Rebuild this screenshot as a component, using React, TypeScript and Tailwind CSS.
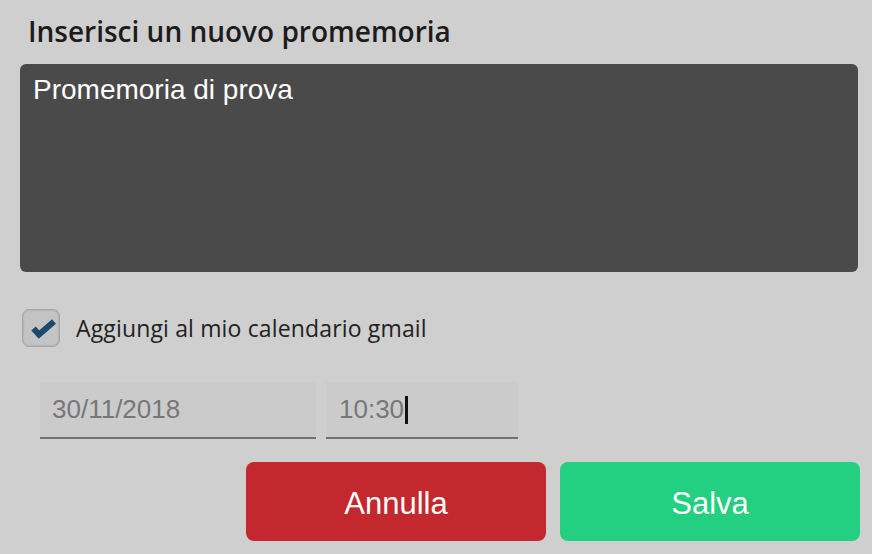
export default function App() {
  return (
    <div className="w-[872px] h-[554px] bg-[#cfcfcf] relative overflow-hidden">
      <div className="pl-[28px] pt-[16px] h-[64px] text-[28px] font-semibold text-[#1c1c1c] leading-[30px]" style={{ fontFamily: '"Open Sans", sans-serif' }}>
        Inserisci un nuovo promemoria
      </div>
      <div className="ml-[20px] w-[838px] h-[208px] bg-[#4a4a4a] rounded-[6px] px-[13px] pt-[10px] text-white text-[28px] leading-[32px]" style={{ fontFamily: '"Liberation Sans", Arial, sans-serif' }}>
        Promemoria di prova
      </div>
      <div className="flex items-center mt-[37px] ml-[22px] h-[38px]">
        <div className="w-[38px] h-[38px] rounded-[7px] bg-[#c4c4c4] border border-[#a6a6a6] shadow-[inset_0_0_2px_rgba(0,0,0,0.25)]">
          <svg width="38" height="38" viewBox="0 0 38 38" className="block">
            <path d="M10.5 18.5 L16 24.5 L31 11.5" fill="none" stroke="#1d4a6a" strokeWidth="6" strokeLinecap="butt" strokeLinejoin="miter" />
          </svg>
        </div>
        <span className="ml-[16px] text-[23px] text-[#222] tracking-[0.15px]" style={{ fontFamily: '"Open Sans", sans-serif' }}>
          Aggiungi al mio calendario gmail
        </span>
      </div>
      <div className="flex mt-[35px] ml-[40px] gap-[10px]" style={{ fontFamily: '"Liberation Sans", Arial, sans-serif' }}>
        <div className="w-[276px] h-[57px] bg-[#cbcbcb] border-b-2 border-[#707070] flex items-center pl-[12px] text-[26px] text-[#777]">
          30/11/2018
        </div>
        <div className="w-[192px] h-[57px] bg-[#cbcbcb] border-b-2 border-[#707070] flex items-center pl-[13px] text-[26px] text-[#777]">
          10:30<span className="inline-block w-[3px] h-[28px] bg-[#111] ml-[1px]" />
        </div>
      </div>
      <div className="flex justify-end gap-[14px] mr-[12px] mt-[23px]" style={{ fontFamily: '"Liberation Sans", Arial, sans-serif' }}>
        <button className="w-[300px] h-[79px] rounded-[8px] bg-[#c4282f] text-white text-[31px] pt-[5px]">Annulla</button>
        <button className="w-[300px] h-[79px] rounded-[8px] bg-[#23cf80] text-white text-[31px] pt-[5px]">Salva</button>
      </div>
    </div>
  );
}
